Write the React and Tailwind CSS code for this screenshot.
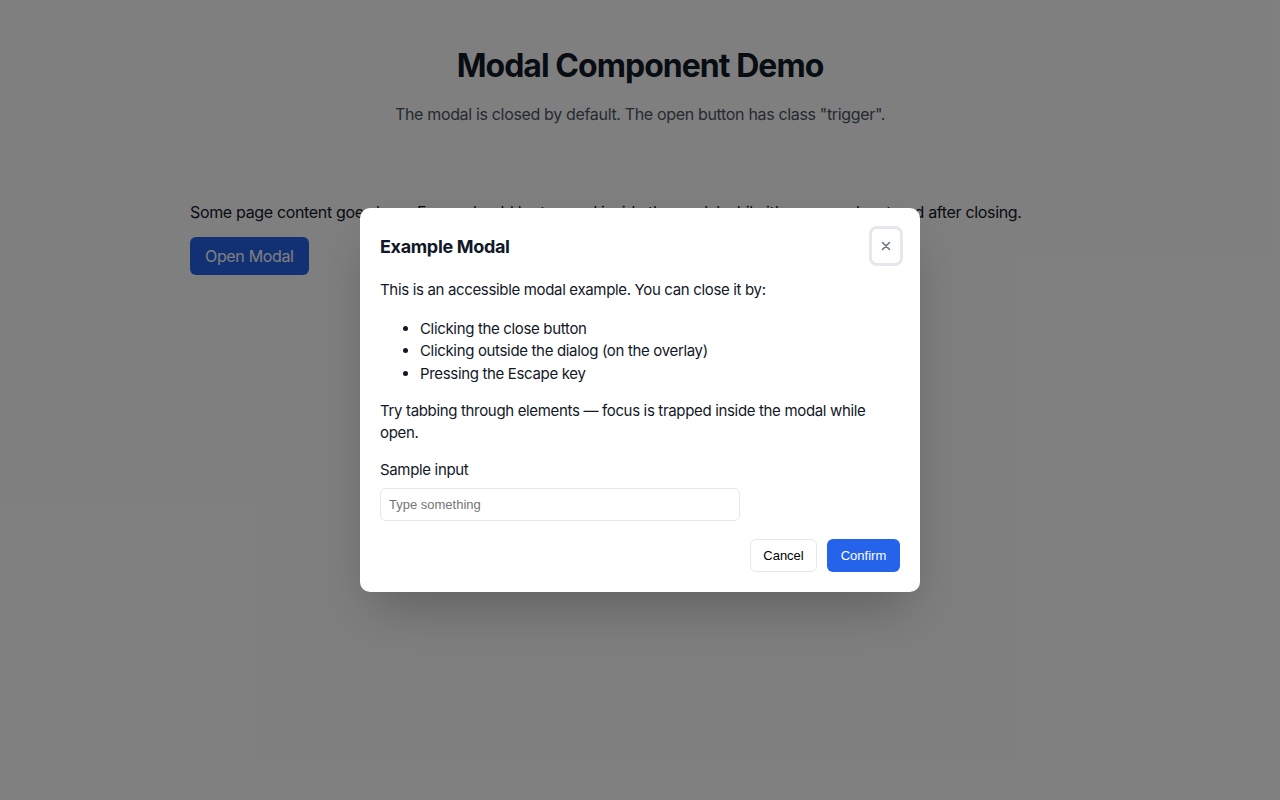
import React from "react";

export default function App() {
  return (
    <div className="relative min-h-[800px] bg-white tracking-[-0.021em]" style={{ fontFamily: "Inter, 'Noto Sans', sans-serif" }}>
      <div className="mx-auto w-[900px] pt-[40px]">
        <h1 className="text-center text-[32px] leading-[48px] font-bold text-[#111827] mt-[2px] tracking-[-0.03em]">Modal Component Demo</h1>
        <p className="text-center text-[16px] leading-[24px] text-[#4b5563] mt-[12px]">
          The modal is closed by default. The open button has class "trigger".
        </p>
        <p className="mt-[74px] text-[16px] leading-[24px] text-[#111827]">
          Some page content goes here. Focus should be trapped inside the modal while it's open and restored after closing.
        </p>
        <button className="mt-[13px] h-[38px] px-[15px] rounded-md bg-[#2563eb] text-white text-[16px]">Open Modal</button>
      </div>

      <div className="absolute inset-0 bg-black/50 flex items-center justify-center">
        <div className="w-[560px] bg-white rounded-[10px] shadow-2xl px-5 pt-[18px] pb-5 text-[#111827]">
          <div className="flex items-center justify-between h-10">
            <h2 className="text-[18px] font-bold leading-[24px] mt-[2px]">Example Modal</h2>
            <button className="w-[34px] h-10 mr-[-3px] rounded-lg border-[3px] border-[#e5e7eb] bg-white flex items-center justify-center text-[#6b7280]">
              <svg width="10" height="10" viewBox="0 0 10 10" fill="none" stroke="currentColor" strokeWidth="1.6" strokeLinecap="round">
                <path d="M1.5 1.5 L8.5 8.5 M8.5 1.5 L1.5 8.5" />
              </svg>
            </button>
          </div>
          <div className="text-[15px] leading-[22.5px] mt-[13.5px]">
            <p>This is an accessible modal example. You can close it by:</p>
            <ul className="list-disc pl-10 mt-[16px]">
              <li>Clicking the close button</li>
              <li>Clicking outside the dialog (on the overlay)</li>
              <li>Pressing the Escape key</li>
            </ul>
            <p className="mt-[14.5px]">Try tabbing through elements — focus is trapped inside the modal while open.</p>
            <label className="block mt-[14.5px]">Sample input</label>
            <input
              placeholder="Type something"
              className="mt-[6.5px] block w-[360px] h-[33px] px-2 rounded-md border border-[#e5e7eb] text-[13px] tracking-normal placeholder:text-[#757575]"
              style={{ fontFamily: "'Liberation Sans', Arial, sans-serif" }}
            />
            <div className="flex justify-end gap-[10px] mt-[18px] tracking-normal" style={{ fontFamily: "'Liberation Sans', Arial, sans-serif" }}>
              <button className="h-[33px] w-[67px] rounded-md border border-[#e5e7eb] bg-white text-[13px] text-black">Cancel</button>
              <button className="h-[33px] w-[73px] rounded-md bg-[#2563eb] text-[13px] text-white">Confirm</button>
            </div>
          </div>
        </div>
      </div>
    </div>
  );
}
